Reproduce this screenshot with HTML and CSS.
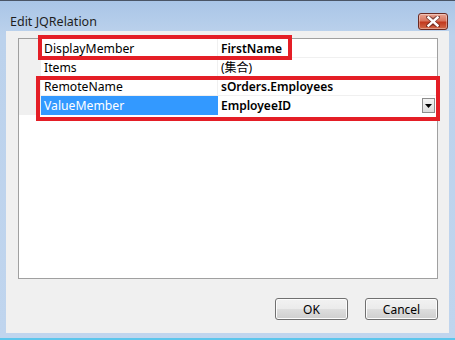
FILE: index.html
```html
<!DOCTYPE html>
<html>
<head>
<meta charset="utf-8">
<link rel="stylesheet" href="styles.css">
</head>
<body>
<div class="window">
  <div class="titlebar">
    <span class="title">Edit JQRelation</span>
    <div class="close">
      <svg width="14" height="11" viewBox="0 0 14 11">
        <path d="M2 1 L7 4.5 L12 1 M2 10 L7 6.5 L12 10 M2 1 L12 10 M12 1 L2 10" stroke="#3a1010" stroke-width="4" stroke-linecap="square" fill="none" opacity="0.55"/>
        <path d="M2.5 1.5 L11.5 9.5 M11.5 1.5 L2.5 9.5" stroke="#ffffff" stroke-width="2.4" stroke-linecap="square" fill="none"/>
      </svg>
    </div>
  </div>
  <div class="client">
    <div class="grid">
      <div class="row">
        <div class="gutter"></div>
        <div class="name">DisplayMember</div>
        <div class="value bold">FirstName</div>
      </div>
      <div class="row">
        <div class="gutter"></div>
        <div class="name">Items</div>
        <div class="value">(集合)</div>
      </div>
      <div class="row">
        <div class="gutter"></div>
        <div class="name">RemoteName</div>
        <div class="value bold">sOrders.Employees</div>
      </div>
      <div class="row">
        <div class="gutter"></div>
        <div class="name selected">ValueMember</div>
        <div class="value bold editing">
          <span>EmployeeID</span>
          <div class="drop">
            <svg width="7" height="4" viewBox="0 0 7 4"><path d="M0 0 H7 L3.5 4 Z" fill="#000"/></svg>
          </div>
        </div>
      </div>
    </div>
    <div class="buttons">
      <div class="btn">OK</div>
      <div class="btn">Cancel</div>
    </div>
  </div>
  <div class="ann ann1"></div>
  <div class="ann ann2"></div>
</div>
</body>
</html>
```
FILE: styles.css
```css
html, body {
  margin: 0;
  padding: 0;
  background: #bfd4ed;
}
body {
  font-family: "Noto Sans", "Noto Sans CJK SC", sans-serif;
  font-size: 12px;
  color: #000;
}
.window {
  position: relative;
  width: 455px;
  height: 340px;
  box-sizing: border-box;
  border-top: 1px solid #4a5566;
  border-bottom: 2px solid #5cc6ec;
  background: linear-gradient(#a9c5e7 0px, #bcd2ec 34px, #c0d5ee 100%);
  overflow: hidden;
}
.titlebar {
  height: 30px;
  display: flex;
  align-items: center;
  padding-left: 10px;
  padding-right: 7px;
}
.title {
  font-size: 12.5px;
  color: #1e1e1e;
  margin-top: 10px;
  flex: 1;
}
.close {
  width: 28px;
  height: 15px;
  margin-top: 10px;
  border: 1px solid #6b2a22;
  border-radius: 3px;
  background: linear-gradient(#e8a493 0%, #d9765f 45%, #c2391e 55%, #d36a4a 100%);
  display: flex;
  align-items: center;
  justify-content: center;
  box-shadow: inset 0 0 0 1px rgba(255,255,255,0.35);
}
.client {
  margin: 0 6px;
  height: 302px;
  background: #f0f0f0;
  box-sizing: border-box;
  padding: 7px 0 0 12px;
}
.grid {
  width: 420px;
  height: 241px;
  box-sizing: border-box;
  border: 1px solid #a0a0a0;
  background: #fff;
}
.row {
  display: flex;
  height: 19px;
}
.gutter {
  width: 22px;
  background: #f0f0f0;
}
.name {
  width: 177px;
  border-right: 1px solid #f0f0f0;
  border-bottom: 1px solid #f0f0f0;
  box-sizing: border-box;
  padding: 1px 0 0 3px;
  font-size: 12.2px;
  line-height: 17px;
  white-space: nowrap;
}
.name.selected {
  background: #3399ff;
  color: #fff;
  border-color: #3399ff;
}
.value {
  flex: 1;
  border-bottom: 1px solid #f0f0f0;
  box-sizing: border-box;
  padding: 1px 0 0 3px;
  line-height: 17px;
  white-space: nowrap;
  display: flex;
  align-items: center;
}
.value.bold {
  font-weight: 600;
}
.value.editing {
  border-bottom-color: #fff;
  justify-content: space-between;
  padding-right: 2px;
}
.drop {
  width: 13px;
  height: 15px;
  box-sizing: border-box;
  border: 1px solid #8d8d8d;
  background: linear-gradient(#f4f4f4, #dcdcdc);
  display: flex;
  align-items: center;
  justify-content: center;
}
.buttons {
  display: flex;
  justify-content: flex-end;
  gap: 17px;
  width: 420px;
  margin-top: 19px;
}
.btn {
  width: 73px;
  height: 22px;
  box-sizing: border-box;
  border: 1px solid #707070;
  border-radius: 3px;
  background: linear-gradient(#f2f2f2 0%, #ebebeb 48%, #dddddd 52%, #cfcfcf 100%);
  box-shadow: inset 0 0 0 1px #fcfcfc;
  display: flex;
  align-items: center;
  justify-content: center;
  font-size: 12px;
}
.ann {
  position: absolute;
  border: 4px solid #e41e26;
  box-sizing: border-box;
}
.ann1 {
  left: 38px;
  top: 34px;
  width: 254px;
  height: 25px;
}
.ann2 {
  left: 36px;
  top: 75px;
  width: 404px;
  height: 45px;
}
```
